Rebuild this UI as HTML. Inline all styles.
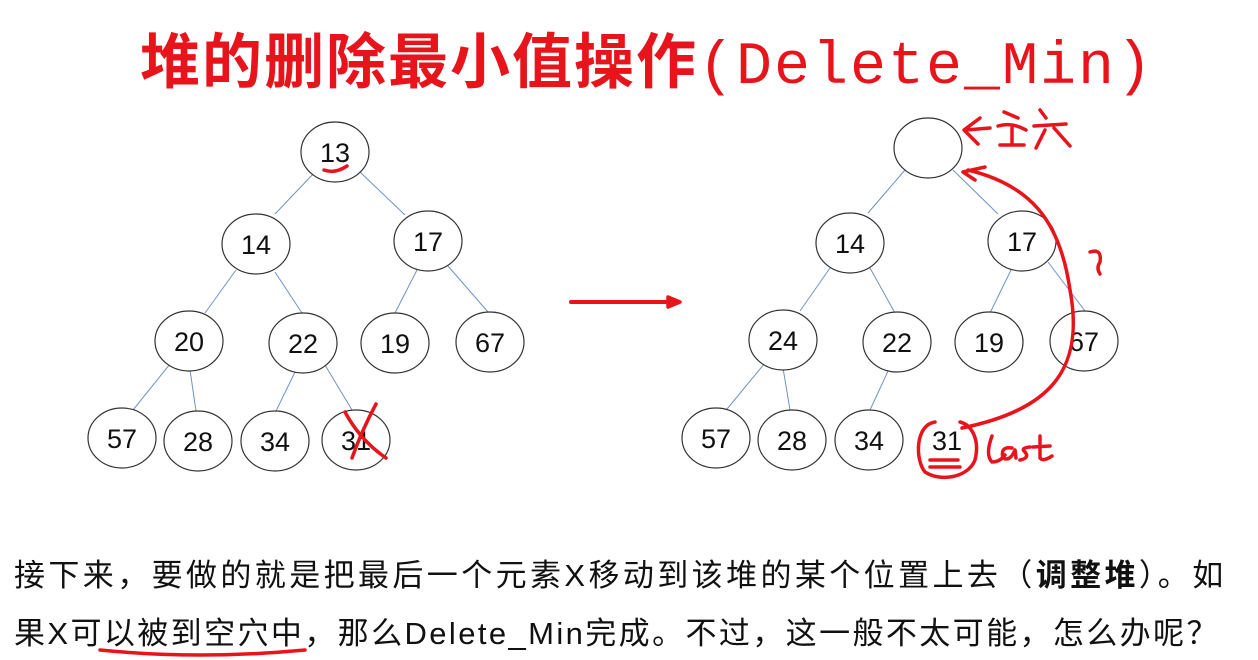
<!DOCTYPE html>
<html><head><meta charset="utf-8"><style>
body{margin:0;width:1258px;height:660px;background:#fff;overflow:hidden;position:relative;font-family:"Liberation Sans","Noto Sans CJK SC",sans-serif}
.t{position:absolute;white-space:nowrap}
</style></head><body>
<div class="t" style="left:140px;top:14px;font-size:60px;color:#e8141b;letter-spacing:2px;font-family:'Liberation Mono','Noto Sans CJK SC',monospace"><b>堆的删除最小值操作</b>(Delete_Min)</div>
<svg width="1258" height="660" style="position:absolute;left:0;top:0">
<g stroke="#6f93c4" stroke-width="1">
<line x1="315" y1="172" x2="275" y2="214"/><line x1="360" y1="172" x2="405" y2="215"/>
<line x1="236" y1="270" x2="205" y2="313"/><line x1="275" y1="272" x2="302" y2="313"/>
<line x1="418" y1="268" x2="395" y2="313"/><line x1="448" y1="266" x2="488" y2="312"/>
<line x1="170" y1="364" x2="133" y2="410"/><line x1="190" y1="370" x2="196" y2="411"/>
<line x1="296" y1="370" x2="276" y2="411"/><line x1="325" y1="365" x2="352" y2="410"/>
<line x1="905" y1="170" x2="868" y2="213"/><line x1="953" y1="170" x2="998" y2="214"/>
<line x1="830" y1="268" x2="800" y2="311"/><line x1="870" y1="268" x2="895" y2="313"/>
<line x1="1012" y1="268" x2="990" y2="313"/><line x1="1048" y1="262" x2="1085" y2="311"/>
<line x1="765" y1="363" x2="727" y2="409"/><line x1="783" y1="368" x2="790" y2="410"/>
<line x1="889" y1="369" x2="870" y2="410"/>
</g>
<g fill="#fff" stroke="#333" stroke-width="1.2">
<ellipse cx="335" cy="152" rx="34" ry="30"/><ellipse cx="256" cy="244" rx="34" ry="30"/><ellipse cx="428" cy="241" rx="34" ry="30"/>
<ellipse cx="189" cy="341" rx="34" ry="30"/><ellipse cx="303" cy="343" rx="34" ry="30"/><ellipse cx="395" cy="343" rx="34" ry="30"/><ellipse cx="490" cy="342" rx="34" ry="30"/>
<ellipse cx="122" cy="438" rx="34" ry="30"/><ellipse cx="198" cy="441" rx="34" ry="30"/><ellipse cx="275" cy="441" rx="34" ry="30"/><ellipse cx="356" cy="440" rx="34" ry="30"/>
<ellipse cx="928" cy="148" rx="34" ry="30"/><ellipse cx="850" cy="243" rx="34" ry="30"/><ellipse cx="1022" cy="241" rx="34" ry="30"/>
<ellipse cx="783" cy="340" rx="34" ry="30"/><ellipse cx="897" cy="342" rx="34" ry="30"/><ellipse cx="989" cy="342" rx="34" ry="30"/><ellipse cx="1084" cy="341" rx="34" ry="30"/>
<ellipse cx="716" cy="438" rx="34" ry="30"/><ellipse cx="792" cy="440" rx="34" ry="30"/><ellipse cx="869" cy="440" rx="34" ry="30"/>
</g>
<g font-family="Liberation Sans,sans-serif" font-size="27" text-anchor="middle" fill="#111">
<text x="335" y="162">13</text><text x="256" y="254">14</text><text x="428" y="251">17</text>
<text x="189" y="351">20</text><text x="303" y="353">22</text><text x="395" y="353">19</text><text x="490" y="352">67</text>
<text x="122" y="448">57</text><text x="198" y="451">28</text><text x="275" y="451">34</text><text x="356" y="450">31</text>
<text x="850" y="253">14</text><text x="1022" y="251">17</text>
<text x="783" y="350">24</text><text x="897" y="352">22</text><text x="989" y="352">19</text><text x="1084" y="351">67</text>
<text x="716" y="448">57</text><text x="792" y="450">28</text><text x="869" y="450">34</text><text x="947" y="450">31</text>
</g>
<g stroke="#e8141b" stroke-width="3.5" fill="none" stroke-linecap="round" stroke-linejoin="round">
<path d="M324 170 Q335 174 347 166"/>
<path d="M345 412 Q360 440 386 458"/><path d="M376 404 Q362 430 352 458"/>
<path d="M571 302 L672 302" stroke-width="4"/><path d="M668 297 L680 302 L668 307 Z" fill="#e8141b"/>
<path d="M980 118 L964 130 L978 144 M966 130 L990 128"/>
<path d="M963 172 L985 167 M963 172 L975 180"/>
<path d="M962 428 C1050 410 1085 370 1070 290 C1060 220 1030 185 968 170"/>
<path d="M935 422 C915 425 915 460 925 472 C940 482 968 478 975 460 C980 440 972 425 960 422"/>
<path d="M930 460 L958 460 M930 467 L960 467"/>
<path d="M1090 252 Q1102 248 1100 262 Q1096 268 1100 274"/>
<path d="M992 436 Q985 455 992 462 Q1000 462 1005 455 M1012 448 Q1000 446 1003 458 Q1010 462 1015 450 L1016 458 M1030 447 Q1020 448 1025 452 Q1030 458 1020 460 M1040 436 L1040 458 Q1043 462 1052 456 M1033 447 L1050 446"/>
<path d="M1004 112 L1018 118 M998 126 Q1012 122 1026 130 M1000 145 L1024 145 M1012 128 L1012 145 M1040 110 L1046 118 M1034 126 L1066 124 M1045 130 L1036 148 M1054 128 L1070 146"/>
<path d="M100 650 Q200 660 305 650"/>
</g>
</svg>
<div class="t" style="left:14px;top:550px;font-size:31px;color:#111;letter-spacing:3.4px;font-family:'Liberation Sans','Noto Sans CJK SC',sans-serif">接下来，要做的就是把最后一个元素X移动到该堆的某个位置上去（<b>调整堆</b>）。如</div>
<div class="t" style="left:14px;top:608px;font-size:31px;color:#111;letter-spacing:2.4px;font-family:'Liberation Sans','Noto Sans CJK SC',sans-serif">果X可以被到空穴中，那么Delete_Min完成。不过，这一般不太可能，怎么办呢？</div>
</body></html>
